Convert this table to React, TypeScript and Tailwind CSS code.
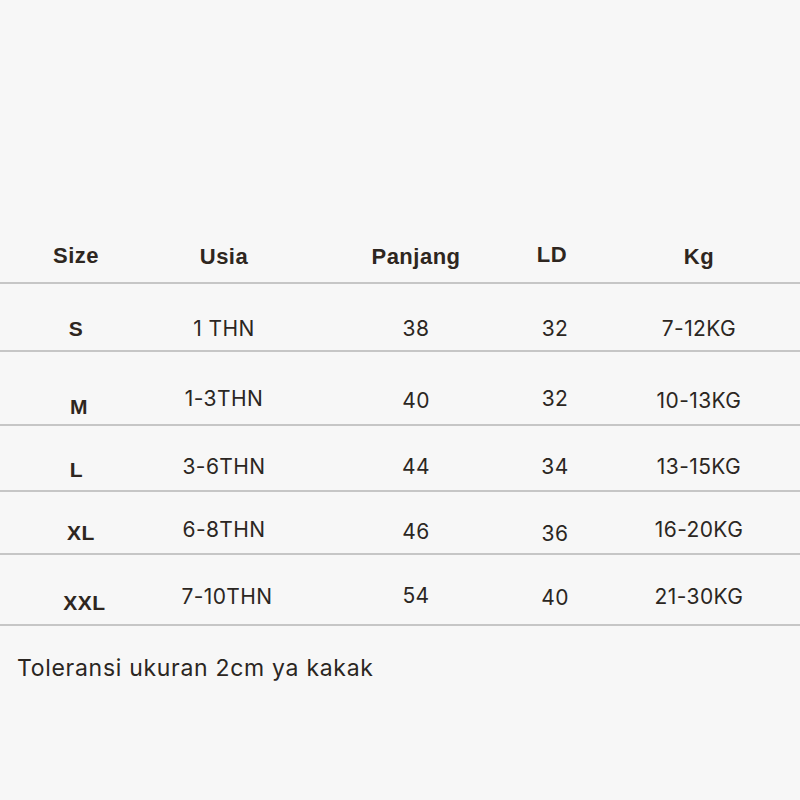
import React from "react";

type Cell = { t: string; pt: string; shift?: string };

const widths = ["w-[152px]", "w-[144px]", "w-[240px]", "w-[38px]", "w-[250px]"];

const header: Cell[] = [
  { t: "Size", pt: "pt-[244px]" },
  { t: "Usia", pt: "pt-[245px]" },
  { t: "Panjang", pt: "pt-[245px]" },
  { t: "LD", pt: "pt-[243px]", shift: "pr-[6px]" },
  { t: "Kg", pt: "pt-[245px]" },
];

type Row = { h: string; cells: Cell[] };

const rows: Row[] = [
  {
    h: "h-[68px]",
    cells: [
      { t: "S", pt: "pt-[33px]" },
      { t: "1 THN", pt: "pt-[33px]" },
      { t: "38", pt: "pt-[33px]" },
      { t: "32", pt: "pt-[33px]" },
      { t: "7-12KG", pt: "pt-[33px]" },
    ],
  },
  {
    h: "h-[74px]",
    cells: [
      { t: "M", pt: "pt-[43px]", shift: "pl-[6px]" },
      { t: "1-3THN", pt: "pt-[35px]" },
      { t: "40", pt: "pt-[37px]" },
      { t: "32", pt: "pt-[35px]" },
      { t: "10-13KG", pt: "pt-[37px]" },
    ],
  },
  {
    h: "h-[66px]",
    cells: [
      { t: "L", pt: "pt-[32px]", shift: "pl-[1px]" },
      { t: "3-6THN", pt: "pt-[29px]" },
      { t: "44", pt: "pt-[29px]" },
      { t: "34", pt: "pt-[29px]" },
      { t: "13-15KG", pt: "pt-[29px]" },
    ],
  },
  {
    h: "h-[63px]",
    cells: [
      { t: "XL", pt: "pt-[29px]", shift: "pl-[10px]" },
      { t: "6-8THN", pt: "pt-[26px]" },
      { t: "46", pt: "pt-[28px]" },
      { t: "36", pt: "pt-[30px]" },
      { t: "16-20KG", pt: "pt-[26px]" },
    ],
  },
  {
    h: "h-[71px]",
    cells: [
      { t: "XXL", pt: "pt-[36px]", shift: "pl-[17px]" },
      { t: "7-10THN", pt: "pt-[30px]", shift: "pl-[6px]" },
      { t: "54", pt: "pt-[29px]" },
      { t: "40", pt: "pt-[31px]" },
      { t: "21-30KG", pt: "pt-[30px]" },
    ],
  },
];

const headBold =
  "font-['Liberation_Sans',Arial,sans-serif] font-bold text-[22px] tracking-[0.5px] text-[#2e2620]";
const sizeBold =
  "font-['Liberation_Sans',Arial,sans-serif] font-bold text-[21px] tracking-[0.5px] text-[#2e2620]";
const reg = "font-['Inter',sans-serif] text-[21px] tracking-[0.4px] text-[#2b2622]";

export default function App() {
  return (
    <div className="w-[800px] h-[800px] overflow-hidden bg-[#f7f7f7]">
      <div className="flex h-[284px] border-b-2 border-[#c6c6c6]">
        {header.map((c, i) => (
          <div
            key={i}
            className={`${widths[i]} shrink-0 flex justify-center whitespace-nowrap leading-[24px] ${c.pt} ${c.shift ?? ""} ${headBold}`}
          >
            {c.t}
          </div>
        ))}
      </div>
      {rows.map((r, ri) => (
        <div key={ri} className={`flex ${r.h} border-b-2 border-[#c6c6c6]`}>
          {r.cells.map((c, i) => (
            <div
              key={i}
              className={`${widths[i]} shrink-0 flex justify-center whitespace-nowrap leading-[24px] ${c.pt} ${c.shift ?? ""} ${
                i === 0 ? sizeBold : reg
              }`}
            >
              {c.t}
            </div>
          ))}
        </div>
      ))}
      <div className="pt-[28px] pl-[17px] font-['Inter',sans-serif] text-[23px] leading-[28px] text-[#2b2622] tracking-[0.7px]">
        Toleransi ukuran 2cm ya kakak
      </div>
    </div>
  );
}
